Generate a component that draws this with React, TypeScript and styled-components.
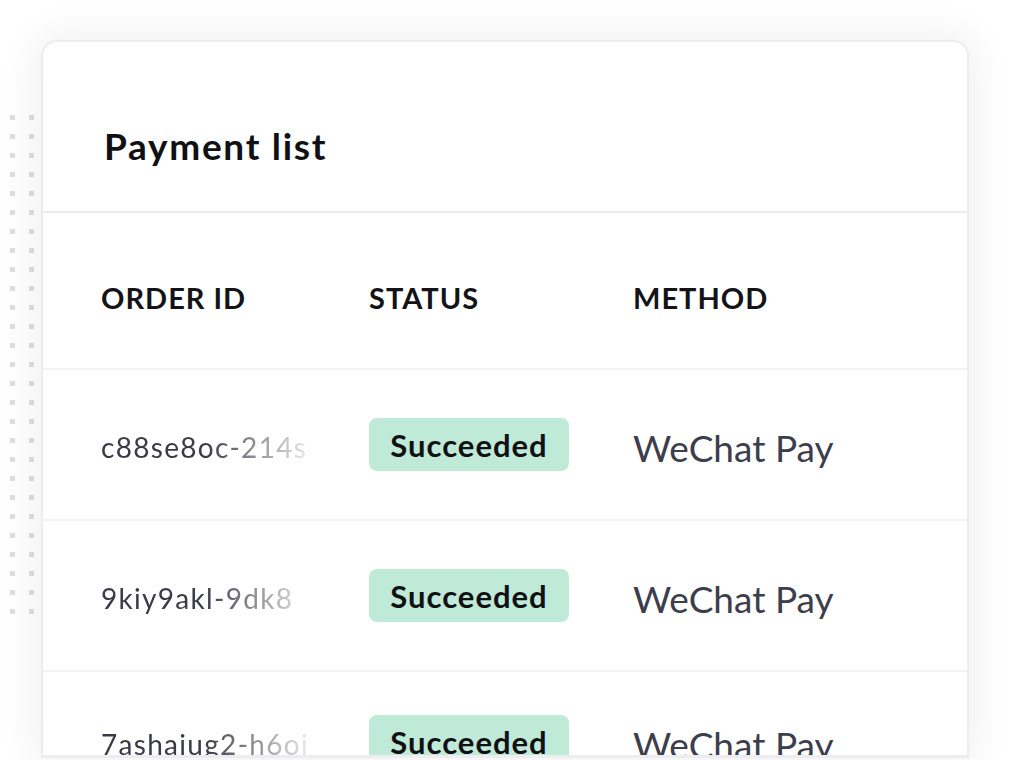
import React from "react";
import styled, { createGlobalStyle } from "styled-components";

const GlobalStyle = createGlobalStyle`
  html, body { margin: 0; padding: 0; background: #ffffff; }
  body { font-family: "Lato", "Noto Sans", sans-serif; overflow: hidden; }
`;

const Page = styled.div`
  width: 1009px;
  height: 760px;
  overflow: hidden;
  display: flex;
  align-items: flex-start;
  padding-top: 40px;
  box-sizing: border-box;
`;

const DotGrid = styled.div`
  width: 41px;
  flex: none;
  box-sizing: border-box;
  padding: 75px 0 0 10px;
  display: grid;
  grid-template-columns: repeat(2, 5px);
  grid-auto-rows: 5px;
  column-gap: 14px;
  row-gap: 14px;
`;

const Dot = styled.span`
  display: block;
  width: 5px;
  height: 5px;
  background: #dedee0;
`;

const Card = styled.section`
  width: 928px;
  height: 718px;
  flex: none;
  box-sizing: border-box;
  background: #ffffff;
  border: 2px solid #ececf1;
  border-bottom-width: 3px;
  border-radius: 16px 16px 0 0;
  box-shadow: 0 0 40px 4px rgba(30, 30, 60, 0.07);
  overflow: hidden;
  display: flex;
  flex-direction: column;
`;

const TitleBar = styled.header`
  height: 171px;
  flex: none;
  box-sizing: border-box;
  padding: 82px 0 0 61px;
  border-bottom: 2px solid #ebebf0;
`;

const Title = styled.h1`
  margin: 0;
  font-family: "Lato", sans-serif;
  font-weight: 700;
  font-size: 37px;
  line-height: 44px;
  color: #111114;
  letter-spacing: 1.7px;
`;

const Row = styled.div<{ $head?: boolean; $lift?: number }>`
  flex: none;
  height: ${(p) => (p.$head ? "157px" : "151px")};
  box-sizing: border-box;
  display: grid;
  grid-template-columns: 268px 264px 1fr;
  align-items: center;
  padding: ${(p) =>
    p.$head ? "14px 0 0 58px" : `0 0 ${p.$lift ?? 0}px 58px`};
  border-bottom: 2px solid #f3f3f6;
`;

const HeadCell = styled.div`
  font-family: "Lato", sans-serif;
  font-weight: 700;
  font-size: 29px;
  letter-spacing: 1px;
  color: #141418;
`;

const OrderId = styled.div`
  width: 208px;
  overflow: hidden;
  white-space: nowrap;
  padding-top: 4px;
  font-family: "Lato", sans-serif;
  font-size: 28px;
  letter-spacing: 1.3px;
  color: #3b3b48;
  -webkit-mask-image: linear-gradient(to right, #000 0%, #000 50%, rgba(0,0,0,0.1) 100%);
  mask-image: linear-gradient(to right, #000 0%, #000 50%, rgba(0,0,0,0.1) 100%);
`;

const Badge = styled.span`
  display: inline-flex;
  align-items: center;
  justify-content: center;
  width: 200px;
  height: 53px;
  box-sizing: border-box;
  border-radius: 8px;
  background: #c0ead8;
  font-family: "Lato", sans-serif;
  font-weight: 700;
  font-size: 31px;
  letter-spacing: 1px;
  color: #111114;
`;

const Method = styled.div`
  padding-top: 6px;
  font-family: "Lato", sans-serif;
  font-size: 37px;
  letter-spacing: 0;
  color: #3d3d4b;
`;

const rows = [
  { id: "c88se8oc-214s", status: "Succeeded", method: "WeChat Pay", lift: 0 },
  { id: "9kiy9akl-9dk8", status: "Succeeded", method: "WeChat Pay", lift: 0 },
  { id: "7ashaiug2-h6oj", status: "Succeeded", method: "WeChat Pay", lift: 10 },
];

export default function App() {
  return (
    <>
      <GlobalStyle />
      <Page>
        <DotGrid>
          {Array.from({ length: 54 }).map((_, i) => (
            <Dot key={i} />
          ))}
        </DotGrid>
        <Card>
          <TitleBar>
            <Title>Payment list</Title>
          </TitleBar>
          <Row $head>
            <HeadCell>ORDER ID</HeadCell>
            <HeadCell>STATUS</HeadCell>
            <HeadCell>METHOD</HeadCell>
          </Row>
          {rows.map((r) => (
            <Row key={r.id} $lift={r.lift}>
              <OrderId>{r.id}</OrderId>
              <div>
                <Badge>{r.status}</Badge>
              </div>
              <Method>{r.method}</Method>
            </Row>
          ))}
        </Card>
      </Page>
    </>
  );
}
